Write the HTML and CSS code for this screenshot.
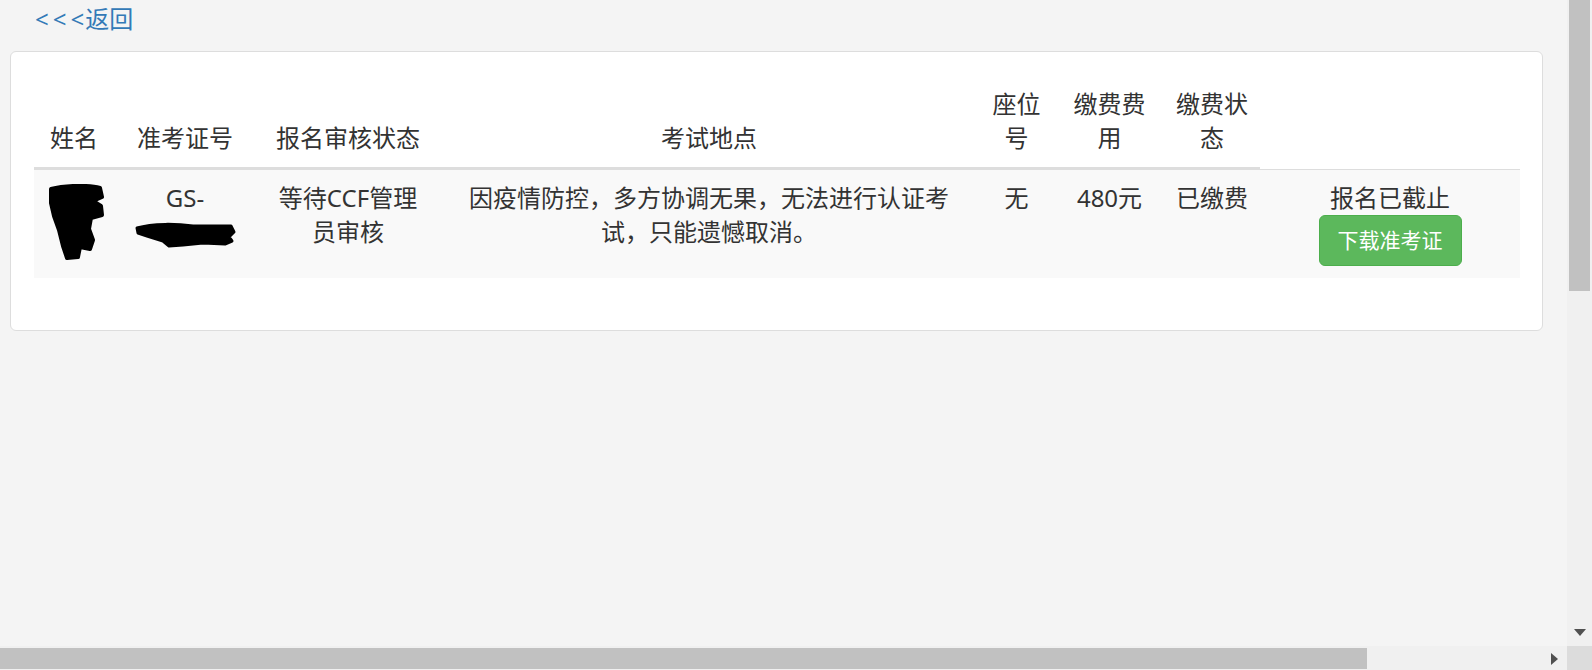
FILE: index.html
```html
<!DOCTYPE html>
<html lang="zh-CN">
<head>
<meta charset="utf-8">
<title>准考证</title>
<link rel="stylesheet" href="styles.css">
</head>
<body>
<div class="topbar"><a class="back" href="#"><span class="arrows">&lt;&lt;&lt;</span>返回</a></div>
<div class="card">
  <table class="tbl">
    <colgroup>
      <col class="c1"><col class="c2"><col class="c3"><col class="c4"><col class="c5"><col class="c6"><col class="c7"><col class="c8">
    </colgroup>
    <thead>
      <tr>
        <th>姓名</th>
        <th>准考证号</th>
        <th>报名审核状态</th>
        <th>考试地点</th>
        <th>座位号</th>
        <th>缴费费用</th>
        <th>缴费状态</th>
        <th class="blank"></th>
      </tr>
    </thead>
    <tbody>
      <tr>
        <td><svg class="redact-name" width="58" height="76" viewBox="0 0 58 76"><path d="M3 5 C 18 1, 42 1, 52 4 L54 13 L45 17 L53 22 L54 31 L43 34 L41 45 L45 56 L42 65 L32 63 L30 73 L19 74 L15 62 L11 46 L6 32 L3 19 Z" fill="#000" stroke="#000" stroke-width="4" stroke-linejoin="round"/></svg></td>
        <td>GS-<svg class="redact-id" width="104" height="30" viewBox="0 0 104 30"><path d="M4 9 C 20 4, 45 5, 60 7 L98 7 L101 13 L96 18 L99 22 L92 25 L70 24 L50 26 L36 27 L30 22 L14 17 L5 14 Z" fill="#000" stroke="#000" stroke-width="3" stroke-linejoin="round"/></svg></td>
        <td>等待CCF管理员审核</td>
        <td>因疫情防控，多方协调无果，无法进行认证考试，只能遗憾取消。</td>
        <td>无</td>
        <td>480元</td>
        <td>已缴费</td>
        <td>报名已截止<br><a class="btn" href="#">下载准考证</a></td>
      </tr>
    </tbody>
  </table>
</div>

<div class="vscroll"><div class="vthumb"></div><svg class="arrow-down" width="12" height="7" viewBox="0 0 12 7"><path d="M0 0 L12 0 L6 7 Z" fill="#505050"/></svg></div>
<div class="hscroll"><div class="hthumb"></div><svg class="arrow-right" width="7" height="12" viewBox="0 0 7 12"><path d="M0 0 L7 6 L0 12 Z" fill="#505050"/></svg></div>
<div class="corner"></div>
</body>
</html>
```

FILE: styles.css
```css
html, body {
  margin: 0;
  padding: 0;
  background: #f4f4f4;
  overflow: hidden;
}
body {
  font-family: "Noto Sans", "Noto Sans CJK SC", sans-serif;
  font-size: 24px;
  line-height: 34px;
  color: #333;
}
.topbar {
  padding: 2px 0 0 35px;
  height: 34px;
}
.back {
  color: #337ab7;
  text-decoration: none;
}
.arrows {
  letter-spacing: 4px;
  margin-right: -3px;
}
.card {
  margin: 15px 0 0 10px;
  width: 1533px;
  box-sizing: border-box;
  background: #fff;
  border: 1px solid #ddd;
  border-radius: 6px;
  padding: 23px 22px 22px 23px;
}
.tbl {
  width: 1486px;
  table-layout: fixed;
  border-collapse: separate;
  border-spacing: 0;
  margin-bottom: 30px;
}
.c1 { width: 80px; }
.c2 { width: 142px; }
.c3 { width: 184px; }
.c4 { width: 538px; }
.c5 { width: 77px; }
.c6 { width: 109px; }
.c7 { width: 96px; }
.c8 { width: 260px; }
.tbl th {
  font-weight: normal;
  text-align: center;
  vertical-align: bottom;
  padding: 12px;
  border-bottom: 2px solid #ddd;
}
.tbl th.blank {
  border-bottom: 2px solid transparent;
}
.tbl td {
  text-align: center;
  vertical-align: top;
  padding: 11px 12px 12px;
  border-top: 1px solid #ddd;
  background: #f9f9f9;
}
.redact-name {
  display: inline-block;
  vertical-align: top;
  margin: 3px 0 0 2px;
}
.redact-id {
  display: inline-block;
  vertical-align: top;
  margin-top: 4px;
}
.btn {
  display: inline-block;
  font-size: 21px;
  line-height: 31px;
  padding: 9px 18px;
  color: #fff;
  background: #5cb85c;
  border: 1px solid #4cae4c;
  border-radius: 6px;
  text-decoration: none;
  vertical-align: top;
}

/* simulated browser scrollbars */
.vscroll {
  position: fixed;
  top: 0;
  right: 0;
  width: 25px;
  bottom: 24px;
  background: #f0f0f0;
}
.vthumb {
  position: absolute;
  top: 0;
  left: 2px;
  width: 21px;
  height: 291px;
  background: #c1c1c1;
}
.arrow-down {
  position: absolute;
  left: 7px;
  bottom: 10px;
}
.hscroll {
  position: fixed;
  left: 0;
  bottom: 0;
  height: 24px;
  right: 25px;
  background: #f0f0f0;
}
.hthumb {
  position: absolute;
  left: 0;
  top: 2px;
  width: 1367px;
  height: 21px;
  background: #c1c1c1;
}
.arrow-right {
  position: absolute;
  right: 9px;
  top: 7px;
}
.corner {
  position: fixed;
  right: 0;
  bottom: 0;
  width: 25px;
  height: 24px;
  background: #dcdcdc;
}
```
